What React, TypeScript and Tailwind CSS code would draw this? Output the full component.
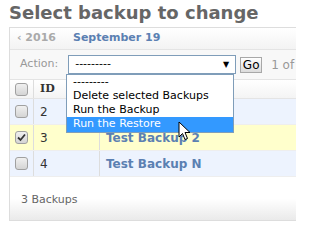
import React from 'react'

function Check({ checked }: { checked?: boolean }) {
  return (
    <div className="w-[13px] h-[13px] rounded-[3px] border border-[#a0a0a0] bg-gradient-to-b from-[#f0f0f0] to-[#d4d4d4] flex items-center justify-center">
      {checked && (
        <svg width="9" height="9" viewBox="0 0 9 9">
          <path d="M1 4.5 L3.5 7 L8 1.5" stroke="#333" strokeWidth="1.8" fill="none" />
        </svg>
      )}
    </div>
  )
}

const rows = [
  { id: 2, name: '', bg: 'bg-[#edf3fe]' },
  { id: 3, name: 'Test Backup 2', bg: 'bg-[#ffffcc]', checked: true },
  { id: 4, name: 'Test Backup N', bg: 'bg-[#edf3fe]' },
]

export default function App() {
  return (
    <div className="relative w-[296px] h-[221px] overflow-hidden bg-white text-[11px] text-[#333]" style={{ fontFamily: '"DejaVu Sans", Verdana, sans-serif' }}>
      <h1 className="h-[27px] pl-[9px] pt-[2px] text-[18px] leading-[22px] font-bold text-[#666]">Select backup to change</h1>
      <div className="ml-[9px] w-[300px] h-[194px] border-l border-t border-[#ddd] flex flex-col">
        <div className="h-[22px] flex items-center bg-gradient-to-b from-white to-[#f3f3f3] border-b border-[#e4e4e4] font-bold">
          <span className="ml-[7px] text-[#aaa]">‹ 2016</span>
          <span className="ml-[17px] text-[#5b80b2]">September 19</span>
        </div>
        <div className="h-[30px] flex items-center bg-[#f8f8f8] border-b border-[#e4e4e4]">
          <span className="ml-[10px] text-[#999]">Action:</span>
          <div className="ml-[10px] w-[168px] h-[19px] border border-[#7f9db9] bg-white flex items-center justify-between px-[6px]">
            <span className="text-black">---------</span>
            <span className="text-[8px] text-black">▼</span>
          </div>
          <div className="ml-[4px] w-[22px] h-[16px] border border-[#a8a8a8] bg-gradient-to-b from-white to-[#dcdcdc] flex items-center justify-center text-[12px] text-black">Go</div>
          <span className="ml-[9px] text-[#999] text-[12px]">1 of</span>
        </div>
        <div className="h-[19px] flex items-center bg-gradient-to-b from-white to-[#f4f4f4] border-b border-[#e4e4e4]">
          <div className="w-[24px] h-full flex items-center justify-center border-r border-[#ddd]"><Check /></div>
          <div className="w-[66px] h-full flex items-center pl-[6px] border-r border-[#ddd] font-bold text-[#333]" style={{ fontFamily: '"DejaVu Serif", serif' }}>ID</div>
        </div>
        {rows.map((r) => (
          <div key={r.id} className={`h-[26px] flex items-center border-b border-[#eee] ${r.bg}`}>
            <div className="w-[24px] h-full flex items-center justify-center border-r border-[#ddd]"><Check checked={r.checked} /></div>
            <div className="w-[66px] h-full flex items-center pl-[6px] border-r border-[#ddd] text-[12px] text-[#333]">{r.id}</div>
            <div className="pl-[6px] font-bold text-[12px] text-[#5b80b2]">{r.name}</div>
          </div>
        ))}
        <div className="flex-1 flex items-center pt-[4px] bg-gradient-to-b from-white via-white to-[#eaeaea] border-b border-[#ddd]">
          <span className="ml-[11px] text-[#666]">3 Backups</span>
        </div>
      </div>
      <div className="absolute left-[66px] top-[74px] w-[168px] border border-[#7f9db9] bg-white text-black text-[11px] leading-[14px]">
        <div className="pl-[6px] h-[14px]">---------</div>
        <div className="pl-[6px] h-[14px]">Delete selected Backups</div>
        <div className="pl-[6px] h-[14px]">Run the Backup</div>
        <div className="pl-[6px] h-[15px] bg-[#3399ff] text-white">Run the Restore</div>
      </div>
      <svg className="absolute left-[178px] top-[121px]" width="14" height="21" viewBox="0 0 14 21">
        <path d="M1 1 L1 16 L4.5 12.5 L7 18.5 L9.5 17.5 L7 11.5 L12 11.5 Z" fill="white" stroke="black" strokeWidth="1" />
      </svg>
    </div>
  )
}
